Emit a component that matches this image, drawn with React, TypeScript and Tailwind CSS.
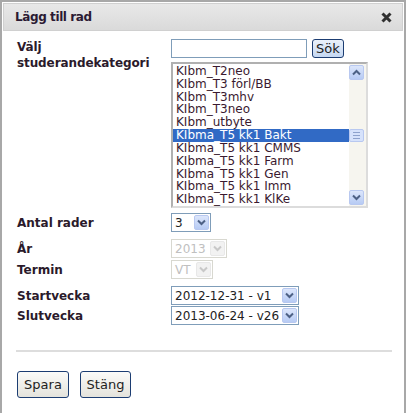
import React from "react";

const items = [
  "KIbm_T2neo",
  "KIbm_T3 förl/BB",
  "KIbm_T3mhv",
  "KIbm_T3neo",
  "KIbm_utbyte",
  "KIbma_T5 kk1 Bakt",
  "KIbma_T5 kk1 CMMS",
  "KIbma_T5 kk1 Farm",
  "KIbma_T5 kk1 Gen",
  "KIbma_T5 kk1 Imm",
  "KIbma_T5 kk1 KlKe",
];

function Arrow({ down = true, disabled = false }: { down?: boolean; disabled?: boolean }) {
  return (
    <div
      className={`flex h-[15px] w-[15px] shrink-0 items-center justify-center rounded-[2px] border ${
        disabled ? "border-[#e8e8e8] bg-[#f2f2f2]" : "border-[#b8c8f0] bg-gradient-to-b from-[#dce6fb] to-[#b7cbf4]"
      }`}
    >
      <svg width="9" height="7" viewBox="0 0 9 7">
        <path
          d={down ? "M1 1.5 L4.5 5 L8 1.5" : "M1 5.5 L4.5 2 L8 5.5"}
          fill="none"
          stroke={disabled ? "#c8c8c8" : "#4d6185"}
          strokeWidth="2"
        />
      </svg>
    </div>
  );
}

function Select({ value, width, disabled = false }: { value: string; width: string; disabled?: boolean }) {
  return (
    <div
      className={`flex h-[19px] items-center justify-between border pl-[3px] pr-[1px] font-normal ${width} ${
        disabled ? "border-[#d8d8d0] text-[#c0c0c0]" : "border-[#7f9db9] text-[#222]"
      }`}
    >
      <span className="whitespace-nowrap text-[12px] leading-none">{value}</span>
      <Arrow disabled={disabled} />
    </div>
  );
}

export default function App() {
  return (
    <div
      className="h-[413px] w-[406px] border-2 border-b-0 border-[#a8a8a8] bg-white p-[1px] text-[#2b1a2b]"
      style={{ fontFamily: '"DejaVu Sans", Verdana, sans-serif' }}
    >
      <div className="flex h-[28px] items-center justify-between border border-[#d0d0d0] bg-gradient-to-b from-[#e8e8e8] to-[#dadada] pl-[11px] pr-[10px]">
        <span className="text-[12px] font-bold tracking-[-0.4px] text-[#2b1a33]">Lägg till rad</span>
        <svg width="11" height="11" viewBox="0 0 11 11">
          <path d="M1.5 1.5 L9.5 9.5 M9.5 1.5 L1.5 9.5" stroke="#303030" strokeWidth="3" />
        </svg>
      </div>

      <div className="pl-[14px] pr-[10px] pt-[8px]">
        <div className="flex">
          <div className="w-[154px] text-[12px] font-bold leading-[16px] tracking-[-0.1px]">
            Välj
            <br />
            studerandekategori
          </div>
          <div className="flex flex-col">
            <div className="flex items-center gap-[5px]">
              <div className="h-[19px] w-[136px] border border-[#7f9db9] bg-white" />
              <button className="h-[19px] rounded-[3px] border border-[#1c3d72] bg-gradient-to-b from-[#eaf1fb] to-[#c5d8f2] px-[3px] text-[13px] leading-none text-[#222]">
                Sök
              </button>
            </div>
            <div className="mt-[4px] flex h-[146px] w-[197px] border-2 border-[#b0b0b0] border-b-[#dcdcdc] border-r-[#dcdcdc]">
              <div className="flex flex-1 flex-col pt-[1px]">
                {items.map((it) => (
                  <div
                    key={it}
                    className={`h-[13px] overflow-hidden whitespace-nowrap pl-[3px] text-[12px] leading-[13px] ${
                      it === "KIbma_T5 kk1 Bakt" ? "bg-[#316ac5] text-white" : "text-[#3a1a30]"
                    }`}
                  >
                    {it}
                  </div>
                ))}
              </div>
              <div className="flex w-[17px] flex-col justify-between bg-[#f6f5ef] py-[1px]">
                <Arrow down={false} />
                <div className="flex h-[13px] w-[15px] flex-col items-center justify-center gap-[2px] rounded-[2px] border border-[#b8c8f0] bg-[#d6e2fb]">
                  <div className="h-px w-[7px] bg-[#8ea2cc]" />
                  <div className="h-px w-[7px] bg-[#8ea2cc]" />
                  <div className="h-px w-[7px] bg-[#8ea2cc]" />
                </div>
                <Arrow />
              </div>
            </div>
          </div>
        </div>

        <div className="mt-[5px] flex flex-col text-[12px] font-bold">
          <div className="flex h-[19px] items-center">
            <div className="w-[154px]">Antal rader</div>
            <Select value="3" width="w-[40px]" />
          </div>
          <div className="mt-[7px] flex h-[19px] items-center">
            <div className="w-[154px]">År</div>
            <Select value="2013" width="w-[56px]" disabled />
          </div>
          <div className="mt-[2px] flex h-[19px] items-center">
            <div className="w-[154px]">Termin</div>
            <Select value="VT" width="w-[42px]" disabled />
          </div>
          <div className="mt-[7px] flex h-[19px] items-center">
            <div className="w-[154px]">Startvecka</div>
            <Select value="2012-12-31 - v1" width="w-[128px]" />
          </div>
          <div className="mt-[1px] flex h-[19px] items-center">
            <div className="w-[154px]">Slutvecka</div>
            <Select value="2013-06-24 - v26" width="w-[128px]" />
          </div>
        </div>

        <div className="mt-[25px] mr-[1px] -ml-[1px] h-[2px] bg-[#dddddd]" />

        <div className="mt-[19px] flex gap-[11px]">
          <button className="h-[27px] w-[52px] rounded-[3px] border border-[#1c3d72] bg-gradient-to-b from-[#fbfbf9] to-[#e4e3dc] text-[13px] text-[#222]">
            Spara
          </button>
          <button className="h-[27px] w-[51px] rounded-[3px] border border-[#1c3d72] bg-gradient-to-b from-[#fbfbf9] to-[#e4e3dc] text-[13px] text-[#222]">
            Stäng
          </button>
        </div>
      </div>
    </div>
  );
}
